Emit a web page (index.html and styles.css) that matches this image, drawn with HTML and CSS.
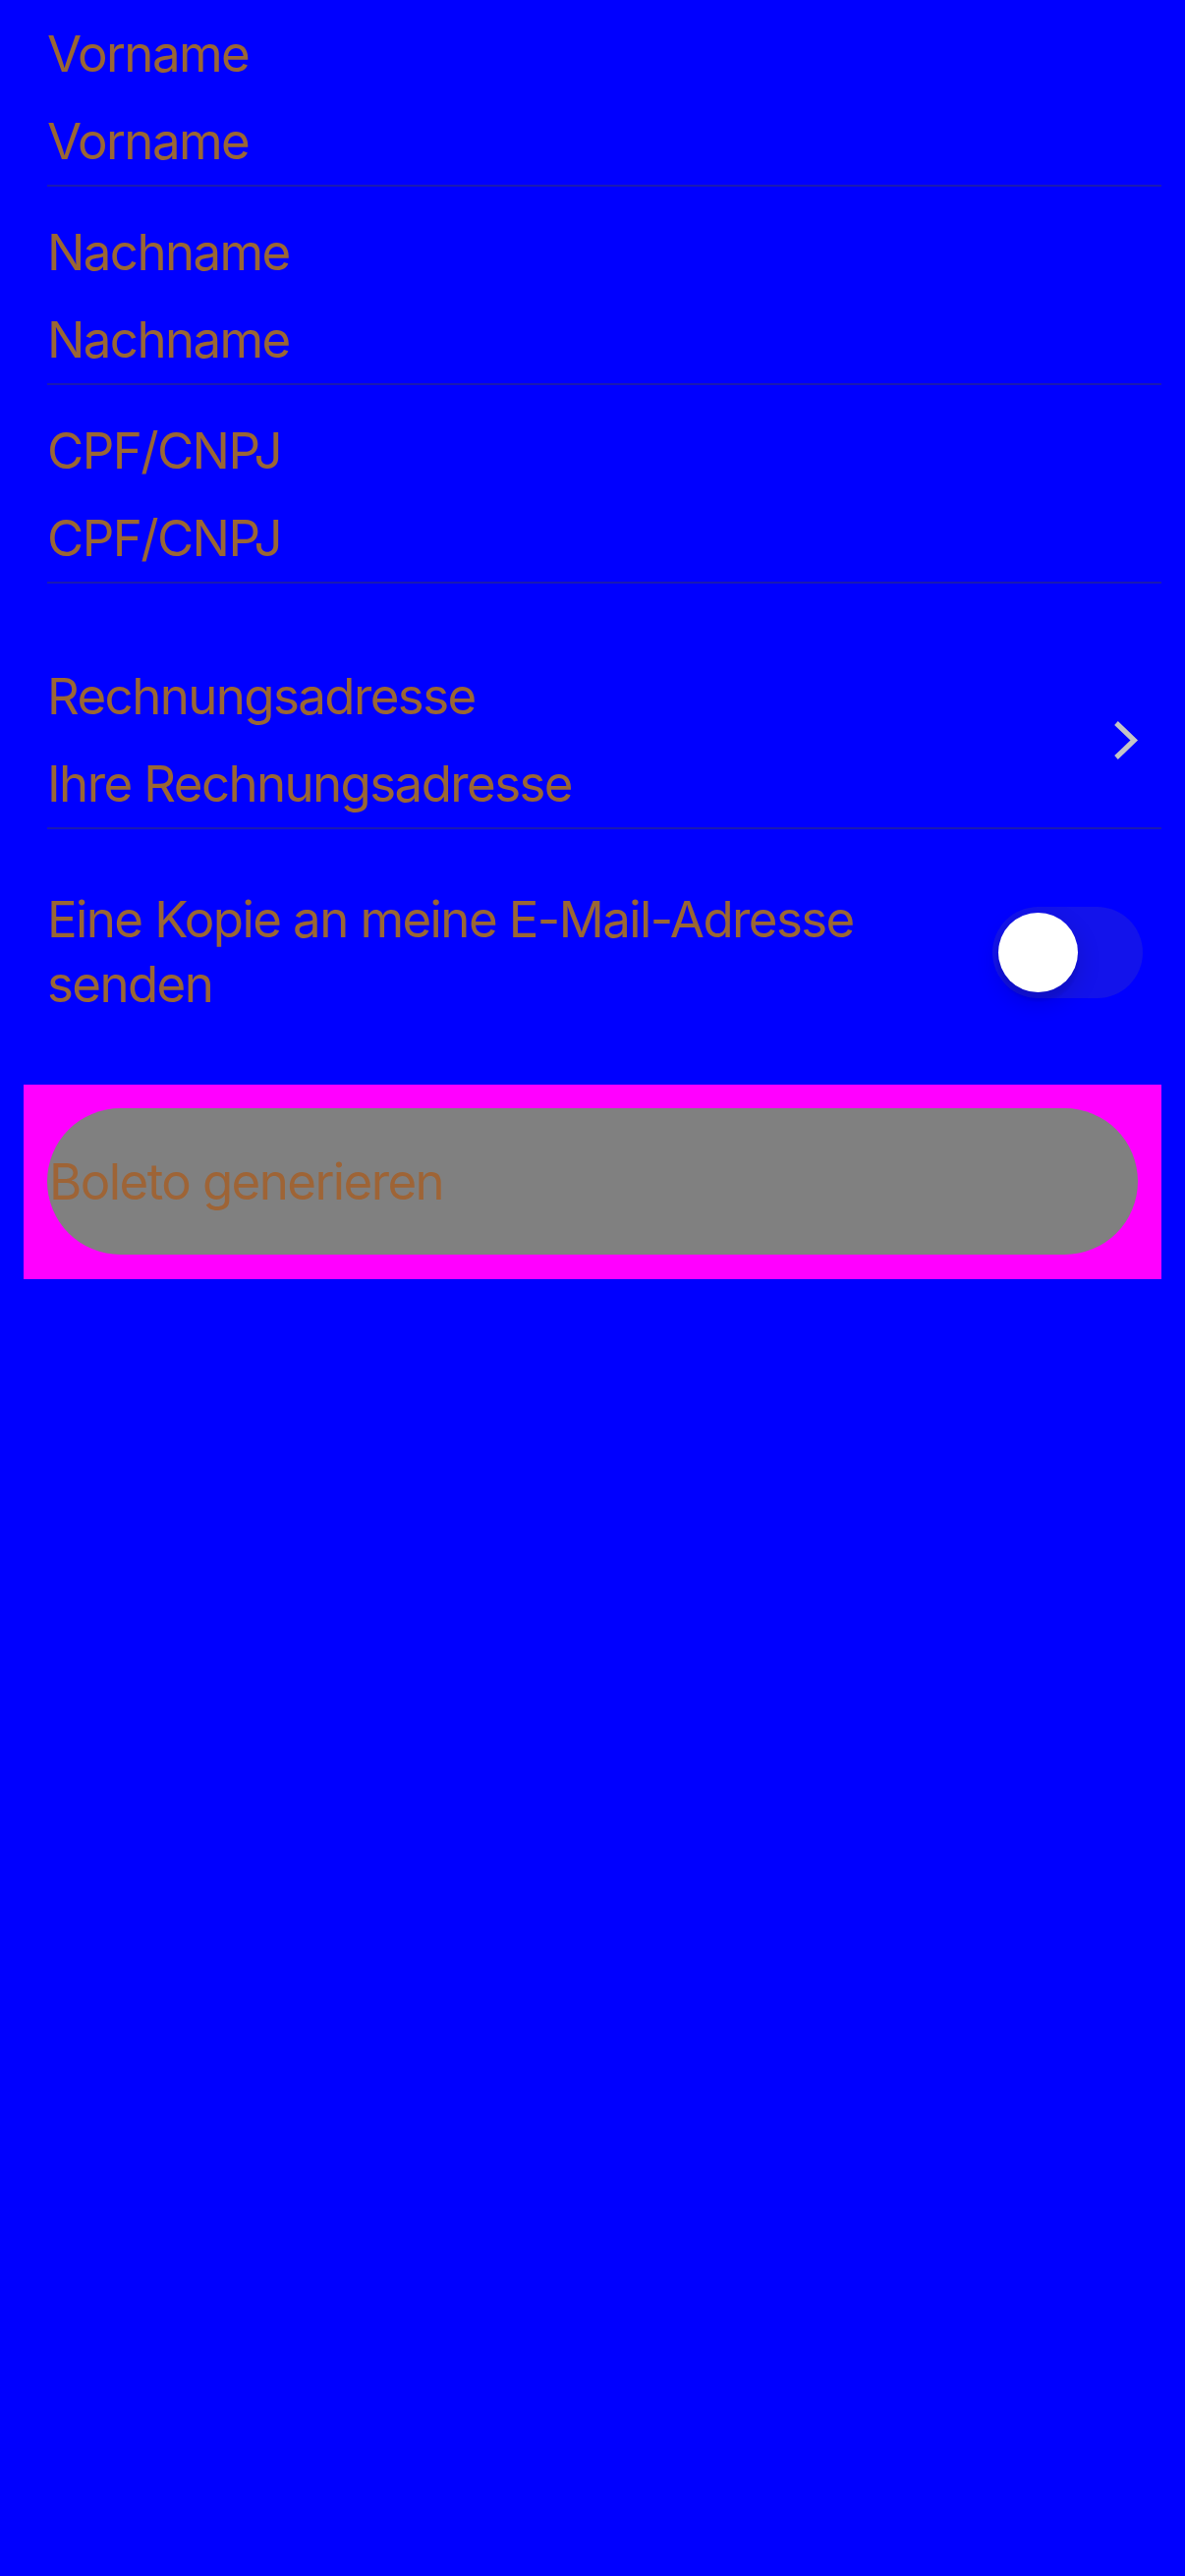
FILE: index.html
```html
<!DOCTYPE html>
<html lang="de">
<head>
<meta charset="utf-8">
<title>Boleto</title>
<link rel="stylesheet" href="styles.css">
</head>
<body>
<main class="form">
  <section class="group">
    <div class="field first">
      <div class="label">Vorname</div>
      <div class="value">Vorname</div>
    </div>
    <div class="field">
      <div class="label">Nachname</div>
      <div class="value">Nachname</div>
    </div>
    <div class="field">
      <div class="label">CPF/CNPJ</div>
      <div class="value">CPF/CNPJ</div>
    </div>
  </section>

  <section class="group group-address">
    <div class="field field-link">
      <div class="texts">
        <div class="label">Rechnungsadresse</div>
        <div class="value">Ihre Rechnungsadresse</div>
      </div>
      <svg class="chevron" width="24" height="39" viewBox="0 0 24 39" aria-hidden="true">
        <polyline points="2,2 20.3,19.5 2,37" fill="none" stroke="#c4c4c6" stroke-width="5.2" stroke-linecap="butt" stroke-linejoin="miter"/>
      </svg>
    </div>
  </section>

  <div class="toggle-row">
    <div class="toggle-text">Eine Kopie an meine E-Mail-Adresse senden</div>
    <div class="switch" role="switch" aria-checked="false">
      <span class="knob"></span>
    </div>
  </div>

  <div class="button-wrap">
    <button class="primary" type="button">Boleto generieren</button>
  </div>
</main>
</body>
</html>
```

FILE: styles.css
```css
html {
  background: #0000ff;
}

body {
  margin: 0;
  min-height: 2622px;
  background: #0000ff;
  font-family: Inter, "Noto Sans", "Liberation Sans", sans-serif;
  font-size: 51px;
  line-height: 66px;
  letter-spacing: -1.6px;
  color: #9a6634;
}

.form {
  display: flex;
  flex-direction: column;
}

.group {
  display: flex;
  flex-direction: column;
  margin-left: 48px;
  margin-right: 24px;
}

.group-address {
  margin-top: 48px;
}

.field {
  display: flex;
  flex-direction: column;
  gap: 23px;
  padding-top: 34px;
  padding-bottom: 11px;
  border-bottom: 2px solid #1a1ab2;
}

.field.first {
  padding-top: 22px;
}

.field-link {
  flex-direction: row;
  align-items: center;
  justify-content: space-between;
}

.texts {
  display: flex;
  flex-direction: column;
  gap: 23px;
}

.label,
.value {
  white-space: nowrap;
}

.chevron {
  flex: none;
  margin-right: 24px;
  overflow: visible;
}

.toggle-row {
  display: flex;
  align-items: center;
  justify-content: space-between;
  margin-left: 48px;
  margin-right: 43px;
  padding-top: 59px;
}

.toggle-text {
  flex: 1;
  max-width: 860px;
}

.switch {
  position: relative;
  flex: none;
  width: 153px;
  height: 93px;
  border-radius: 46.5px;
  background: #1313eb;
}

.knob {
  position: absolute;
  left: 6px;
  top: 6px;
  width: 81px;
  height: 81px;
  border-radius: 50%;
  background: #ffffff;
  box-shadow: 0 9px 24px rgba(0, 0, 0, 0.15), 0 9px 3px rgba(0, 0, 0, 0.06);
}

.button-wrap {
  margin: 69px 24px 0 24px;
  padding: 24px 24px 25px 24px;
  background: #ff00ff;
}

.primary {
  display: flex;
  align-items: center;
  width: 100%;
  height: 149px;
  margin: 0;
  padding: 0 0 0 2px;
  border: 0;
  border-radius: 74.5px;
  background: #808080;
  font: inherit;
  letter-spacing: inherit;
  color: #9e6436;
  text-align: left;
}
```
